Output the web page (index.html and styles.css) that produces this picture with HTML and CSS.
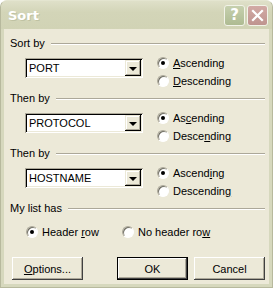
FILE: index.html
```html
<!DOCTYPE html>
<html lang="en">
<head>
<meta charset="UTF-8">
<title>Sort</title>
<link rel="stylesheet" href="styles.css">
</head>
<body>
<div class="window">
    <div class="titlebar">
        <span class="title">Sort</span>
        <span class="tbtn help">?</span>
        <span class="tbtn close">
            <svg width="13" height="13" viewBox="0 0 13 13"><path d="M2 2 L11 11 M11 2 L2 11" stroke="#fff" stroke-width="2.2" stroke-linecap="square"/></svg>
        </span>
    </div>
    <div class="content">
        <div class="section">
            <div class="group-head">Sort by</div>
            <div class="row">
                <div class="combo"><span class="value">PORT</span><span class="drop"></span></div>
                <div class="radios">
                    <label class="radio"><span class="dot on"></span><span><u>A</u>scending</span></label>
                    <label class="radio"><span class="dot"></span><span><u>D</u>escending</span></label>
                </div>
            </div>
        </div>
        <div class="section">
            <div class="group-head">Then by</div>
            <div class="row">
                <div class="combo"><span class="value">PROTOCOL</span><span class="drop"></span></div>
                <div class="radios">
                    <label class="radio"><span class="dot on"></span><span>As<u>c</u>ending</span></label>
                    <label class="radio"><span class="dot"></span><span>Desce<u>n</u>ding</span></label>
                </div>
            </div>
        </div>
        <div class="section">
            <div class="group-head">Then by</div>
            <div class="row">
                <div class="combo"><span class="value">HOSTNAME</span><span class="drop"></span></div>
                <div class="radios">
                    <label class="radio"><span class="dot on"></span><span>Ascend<u>i</u>ng</span></label>
                    <label class="radio"><span class="dot"></span><span>Descendin<u>g</u></span></label>
                </div>
            </div>
        </div>
        <div class="group-head">My list has</div>
        <div class="list-row">
            <label class="radio header-opt"><span class="dot on"></span><span>Header <u>r</u>ow</span></label>
            <label class="radio"><span class="dot"></span><span>No header ro<u>w</u></span></label>
        </div>
        <div class="buttons">
            <span class="btn"><span><u>O</u>ptions...</span></span>
            <span class="spacer"></span>
            <span class="btn default">OK</span>
            <span class="btn">Cancel</span>
        </div>
    </div>
</div>
</body>
</html>
```
FILE: styles.css
```css
* {
    margin: 0;
    padding: 0;
    box-sizing: border-box;
}

body {
    width: 273px;
    height: 288px;
    overflow: hidden;
    background: #ffffff;
    font-family: "Liberation Sans", Arial, sans-serif;
    font-size: 11px;
    color: #000;
}

.window {
    width: 273px;
    height: 288px;
    display: flex;
    flex-direction: column;
    background: #d6d8bd;
    border-radius: 7px 7px 0 0;
    border: 1px solid #b7b99d;
    border-top-color: #e4e5d0;
}

.titlebar {
    height: 28px;
    display: flex;
    align-items: center;
    padding: 0 4px 0 7px;
    background: linear-gradient(#dfe0c9, #d3d5b8 40%, #d1d3b5);
    border-radius: 6px 6px 0 0;
}

.title {
    flex: 1;
    color: #fff;
    font-family: "DejaVu Sans", sans-serif;
    font-weight: bold;
    font-size: 13px;
    text-shadow: 1px 1px 0 #bfc2a3;
}

.tbtn {
    width: 21px;
    height: 21px;
    margin-left: 2px;
    border: 1px solid #f2f3e8;
    border-radius: 3px;
    display: flex;
    align-items: center;
    justify-content: center;
    color: #fff;
    font-family: "DejaVu Sans", sans-serif;
    font-weight: bold;
    font-size: 15px;
}

.help {
    background: linear-gradient(#c6d0ae, #aebb92);
}

.close {
    background: linear-gradient(#d2aaa5, #bf948f);
}

.content {
    flex: 1;
    margin: 0 3px 3px 3px;
    background: #ece9d8;
    padding: 8px 4px 0 6px;
    display: flex;
    flex-direction: column;
}

.group-head {
    height: 13px;
    line-height: 13px;
    display: flex;
    align-items: center;
}

.group-head::after {
    content: "";
    flex: 1;
    margin-left: 6px;
    border-top: 1px solid #aca899;
    border-bottom: 1px solid #fff;
}

.section {
    margin-bottom: 2px;
}

.row {
    display: flex;
    align-items: flex-start;
    margin-top: 4px;
    padding-left: 15px;
}

.combo {
    width: 118px;
    height: 20px;
    margin-top: 4px;
    background: #fff;
    display: flex;
    align-items: center;
    padding: 2px;
    box-shadow: inset 1px 1px #aca899, inset -1px -1px #fff, inset 2px 2px #000, inset -2px -2px #ece9d8;
}

.combo .value {
    flex: 1;
    padding-left: 2px;
}

.combo .drop {
    width: 16px;
    height: 16px;
    background: #ece9d8;
    box-shadow: inset -1px -1px #000, inset 1px 1px #ece9d8, inset -2px -2px #aca899, inset 2px 2px #fff;
    display: flex;
    align-items: center;
    justify-content: center;
}

.combo .drop::after {
    content: "";
    border-left: 4px solid transparent;
    border-right: 4px solid transparent;
    border-top: 4px solid #000;
    margin-top: 1px;
}

.radios {
    margin-left: 14px;
    display: flex;
    flex-direction: column;
}

.radio {
    height: 18px;
    display: flex;
    align-items: center;
}

.dot {
    width: 12px;
    height: 12px;
    margin-right: 4px;
    border-radius: 50%;
    background: #fff;
    border: 1px solid;
    border-color: #aca899 #fff #fff #aca899;
    box-shadow: inset 1px 1px #716f64;
    display: flex;
    align-items: center;
    justify-content: center;
}

.dot.on::after {
    content: "";
    width: 4px;
    height: 4px;
    border-radius: 50%;
    background: #000;
}

.list-row {
    display: flex;
    margin-top: 8px;
    padding-left: 16px;
}

.header-opt {
    width: 96px;
}

.buttons {
    display: flex;
    margin-top: 16px;
    padding-left: 2px;
}

.btn {
    width: 71px;
    height: 23px;
    display: flex;
    align-items: center;
    justify-content: center;
    background: #ece9d8;
    box-shadow: inset -1px -1px #404040, inset 1px 1px #fff, inset -2px -2px #aca899, inset 2px 2px #ece9d8;
}

.btn + .btn {
    margin-left: 6px;
}

.spacer {
    flex: 1;
}

.btn.default {
    box-shadow: inset 0 0 0 1px #000, inset -2px -2px #404040, inset 2px 2px #fff, inset -3px -3px #aca899;
}
```
